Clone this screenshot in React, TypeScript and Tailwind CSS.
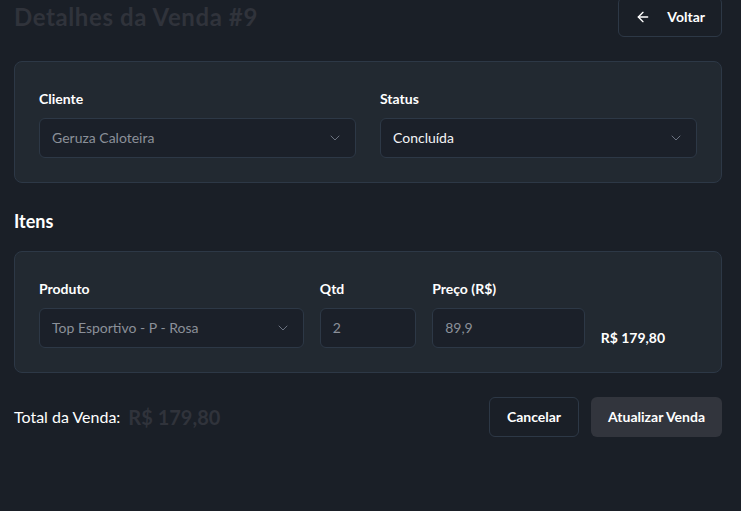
import React from "react";
import { ArrowLeft, ChevronDown } from "lucide-react";

const font = { fontFamily: 'Lato, "Noto Sans", sans-serif' };

const Select = ({ value, muted }: { value: string; muted?: boolean }) => (
  <div className="flex h-10 items-center justify-between rounded-md border border-[#2d3846] bg-[#1b2029] px-3">
    <span className={"text-sm " + (muted ? "text-[#8b9099]" : "text-[#f3f4f6]")}>{value}</span>
    <ChevronDown size={16} strokeWidth={1.5} className="text-[#6b7280]" />
  </div>
);

const Input = ({ value }: { value: string }) => (
  <div className="flex h-10 items-center rounded-md border border-[#2d3846] bg-[#1b2029] px-3">
    <span className="text-sm text-[#8b9099]">{value}</span>
  </div>
);

const Label = ({ children }: { children: React.ReactNode }) => (
  <div className="mb-1.5 text-sm leading-[26px] font-bold text-white">{children}</div>
);

export default function App() {
  return (
    <div className="min-h-screen bg-[#1a1f27] pr-[19px] pl-[14px] text-white" style={font}>
      <div className="-mt-[3px]">
        {/* header */}
        <div className="mb-6 flex items-center justify-between">
          <h1 className="text-2xl font-bold tracking-[0.025em] text-[#30333b]">Detalhes da Venda #9</h1>
          <button className="flex h-10 items-center gap-4 rounded-md border border-[#2d3846] px-4 text-sm font-bold text-white">
            <ArrowLeft size={16} />
            Voltar
          </button>
        </div>

        {/* cliente / status */}
        <div className="rounded-lg border border-[#2d3846] bg-[#222931] p-6">
          <div className="grid grid-cols-2 gap-6">
            <div>
              <Label>Cliente</Label>
              <Select value="Geruza Caloteira" muted />
            </div>
            <div>
              <Label>Status</Label>
              <Select value="Concluída" />
            </div>
          </div>
        </div>

        <h2 className="mt-6 mb-4 text-lg leading-7 font-bold text-white">Itens</h2>

        {/* itens */}
        <div className="rounded-lg border border-[#2d3846] bg-[#222931] p-6">
          <div className="grid grid-cols-12 items-end gap-4">
            <div className="col-span-5">
              <Label>Produto</Label>
              <Select value="Top Esportivo - P - Rosa" muted />
            </div>
            <div className="col-span-2">
              <Label>Qtd</Label>
              <Input value="2" />
            </div>
            <div className="col-span-3">
              <Label>Preço (R$)</Label>
              <Input value="89,9" />
            </div>
            <div className="col-span-2 text-sm font-bold text-white">R$ 179,80</div>
          </div>
        </div>

        {/* footer */}
        <div className="mt-6 flex items-center justify-between">
          <div className="flex items-center gap-2">
            <span className="text-base text-white">Total da Venda:</span>
            <span className="text-xl font-bold text-[#30333b]">R$ 179,80</span>
          </div>
          <div className="flex gap-3">
            <button className="h-10 rounded-md border border-[#2d3846] px-[17px] text-sm font-bold text-white">
              Cancelar
            </button>
            <button className="h-10 rounded-md bg-[#32353d] px-[17px] text-sm font-bold text-white">
              Atualizar Venda
            </button>
          </div>
        </div>
      </div>
    </div>
  );
}
